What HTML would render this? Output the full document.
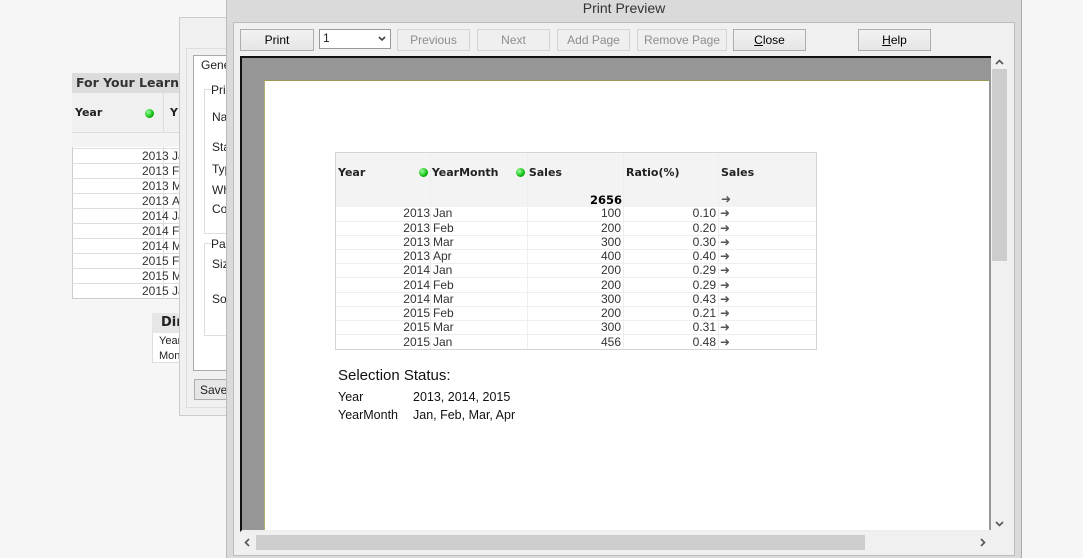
<!DOCTYPE html>
<html><head><style>
*{margin:0;padding:0;box-sizing:border-box}
body{width:1083px;height:558px;background:#f6f6f6;position:relative;overflow:hidden;font-family:"Liberation Sans",sans-serif;font-size:11px;color:#222}
.a{position:absolute}
.btn{position:absolute;top:29px;height:22px;border:1px solid #adadad;background:linear-gradient(#f2f2f2,#e6e6e6);text-align:center;line-height:20px;font-size:12px;color:#000}
.dis{border-color:#d4d4d4;background:#efefef;color:#8d8d8d}
.dot{display:inline-block;width:9px;height:9px;border-radius:50%;background:radial-gradient(circle at 35% 35%,#9f9,#1b1 60%,#070);vertical-align:-1px}
.t td{height:14.2px;padding:0 2px;border-bottom:1px solid #eee;font-size:12px;color:#333;white-space:nowrap;line-height:13px}
.arr{font-size:12px;color:#555;font-weight:bold;font-family:"DejaVu Sans",sans-serif}
.b{font-family:"DejaVu Sans",sans-serif;font-weight:bold;font-size:11px}
.lr div{height:15px;border-top:1px solid #ddd;padding-left:70px;line-height:14px}
</style></head><body>
<div class="a" style="left:72px;top:73px;width:110px;height:226px;background:#fff;border:1px solid #ccc"></div>
<div class="a b" style="left:72px;top:73px;width:110px;height:20px;background:#dcdcdc;font-size:12.5px;color:#333;padding:2px 4px;white-space:nowrap;overflow:hidden">For Your Learning</div>
<div class="a" style="left:72px;top:93px;width:110px;height:40px;background:#f0f0f0;border-bottom:1px solid #ddd"></div>
<div class="a b" style="left:75px;top:106px">Year</div>
<div class="a" style="left:145px;top:108px"><span class="dot"></span></div>
<div class="a" style="left:163px;top:93px;width:1px;height:206px;background:#ddd"></div>
<div class="a b" style="left:170px;top:106px">Y</div>
<div class="a" style="left:72px;top:133px;width:110px;height:14px;background:#f3f3f3"></div>
<div class="a lr" style="left:72px;top:148px;width:107px;font-size:12px;color:#333">
<div>2013&nbsp;Ja</div><div>2013&nbsp;Fe</div><div>2013&nbsp;M</div><div>2013&nbsp;Ap</div><div>2014&nbsp;Ja</div><div>2014&nbsp;Fe</div><div>2014&nbsp;M</div><div>2015&nbsp;Fe</div><div>2015&nbsp;M</div><div>2015&nbsp;Ja</div></div>
<div class="a" style="left:152px;top:313px;width:30px;height:50px;background:#fff;border:1px solid #ddd"></div>
<div class="a b" style="left:152px;top:313px;width:30px;height:20px;background:#e6e6e6;font-size:13px;padding:2px 9px">Dir</div>
<div class="a" style="left:159px;top:334px;font-size:11px;line-height:15px">Year<br>Mon</div>
<div class="a" style="left:179px;top:17px;width:60px;height:399px;background:#f0f0f0;border:1px solid #ccc"></div>
<div class="a" style="left:186px;top:48px;width:50px;height:360px;border:1px solid #ddd"></div>
<div class="a" style="left:193px;top:55px;width:45px;height:316px;background:#fff;border:1px solid #aaa"></div>
<div class="a" style="left:201px;top:58px;font-size:12px">Gene</div>
<div class="a" style="left:204px;top:89px;width:30px;height:145px;border:1px solid #ddd"></div>
<div class="a" style="left:204px;top:243px;width:30px;height:93px;border:1px solid #ddd"></div>
<div class="a" style="left:211px;top:84px;font-size:12px;line-height:1;background:#fff">Pri</div>
<div class="a" style="left:212px;top:110px;font-size:12px">Na</div>
<div class="a" style="left:212px;top:140px;font-size:12px">Sta</div>
<div class="a" style="left:212px;top:162px;font-size:12px">Typ</div>
<div class="a" style="left:212px;top:183px;font-size:12px">Wh</div>
<div class="a" style="left:212px;top:202px;font-size:12px">Co</div>
<div class="a" style="left:211px;top:237px;font-size:12px;background:#fff">Pap</div>
<div class="a" style="left:212px;top:257px;font-size:12px">Siz</div>
<div class="a" style="left:212px;top:292px;font-size:12px">Sou</div>
<div class="a" style="left:194px;top:379px;width:40px;height:21px;border:1px solid #adadad;background:#e6e6e6;padding:3px 5px;font-size:12px">Save</div>
<div class="a" style="left:226px;top:0;width:796px;height:558px;background:#dadada;border-left:1px solid #bbb;border-right:1px solid #aaa"></div>
<div class="a" style="left:226px;top:0;width:796px;height:20px;text-align:center;font-size:14px;line-height:17px;color:#333">Print Preview</div>
<div class="a" style="left:233px;top:22px;width:782px;height:534px;background:#f0f0f0;border:1px solid #bdbdbd"></div>
<div class="btn" style="left:240px;width:74px">Print</div>
<div class="a" style="left:319px;top:29px;width:72px;height:20px;border:1px solid #999;background:#fff;padding:1px 3px;font-size:12px">1<svg style="position:absolute;right:4px;top:6px" width="8" height="6"><path d="M1 1L4 4L7 1" stroke="#444" stroke-width="1.6" fill="none"/></svg></div>
<div class="btn dis" style="left:397px;width:73px">Previous</div>
<div class="btn dis" style="left:477px;width:73px">Next</div>
<div class="btn dis" style="left:557px;width:73px">Add Page</div>
<div class="btn dis" style="left:637px;width:90px">Remove Page</div>
<div class="btn" style="left:733px;width:73px"><u>C</u>lose</div>
<div class="btn" style="left:858px;width:73px"><u>H</u>elp</div>
<div class="a" style="left:240px;top:56px;width:751px;height:476px;background:#969696;border-top:2px solid #111;border-left:2px solid #111;border-bottom:2px solid #eee"></div>
<div class="a" style="left:264px;top:80px;width:725px;height:450px;background:#fff;border-top:1px solid #9a9a50;border-left:1px solid #b0b070"></div>
<div class="a" style="left:991px;top:56px;width:17px;height:476px;background:#f0f0f0"></div>
<div class="a" style="left:992px;top:69px;width:15px;height:192px;background:#cdcdcd"></div>
<svg class="a" style="left:995px;top:59px" width="9" height="6"><path d="M1 5L4.5 1.5L8 5" stroke="#555" stroke-width="1.6" fill="none"/></svg>
<svg class="a" style="left:995px;top:521px" width="9" height="6"><path d="M1 1L4.5 4.5L8 1" stroke="#555" stroke-width="1.6" fill="none"/></svg>
<div class="a" style="left:240px;top:532px;width:751px;height:18px;background:#f0f0f0"></div>
<div class="a" style="left:256px;top:535px;width:609px;height:15px;background:#cdcdcd"></div>
<svg class="a" style="left:244px;top:538px" width="6" height="9"><path d="M5 1L1.5 4.5L5 8" stroke="#555" stroke-width="1.6" fill="none"/></svg>
<svg class="a" style="left:980px;top:538px" width="6" height="9"><path d="M1 1L4.5 4.5L1 8" stroke="#555" stroke-width="1.6" fill="none"/></svg>
<div class="a" style="left:335px;top:152px;width:482px;height:198px;border:1px solid #d4d4d4;background:#fff"></div>
<div class="a" style="left:336px;top:153px;width:480px;height:54px;background:#f3f3f3"></div>
<div class="a" style="left:430px;top:153px;width:1px;height:196px;background:#eee"></div>
<div class="a" style="left:527px;top:153px;width:1px;height:196px;background:#eee"></div>
<div class="a" style="left:623px;top:153px;width:1px;height:196px;background:#eee"></div>
<div class="a" style="left:718px;top:153px;width:1px;height:196px;background:#eee"></div>
<div class="a b" style="left:338px;top:166px">Year</div>
<div class="a b" style="left:419px;top:166px"><span class="dot"></span> YearMonth</div>
<div class="a b" style="left:516px;top:166px"><span class="dot"></span> Sales</div>
<div class="a b" style="left:626px;top:166px">Ratio(%)</div>
<div class="a b" style="left:721px;top:166px">Sales</div>
<div class="a b" style="left:560px;top:193px;width:62px;text-align:right;font-size:11.5px;color:#000">2656</div>
<div class="a" style="left:721px;top:192px"><span class="arr">&#10140;</span></div>
<table class="a t" style="left:336px;top:207px;width:480px;border-collapse:collapse">
<colgroup><col style="width:95px"><col style="width:96px"><col style="width:96px"><col style="width:95px"><col></colgroup>
<tr><td style="text-align:right;padding-right:1px">2013</td><td>Jan</td><td style="text-align:right">100</td><td style="text-align:right">0.10</td><td><span class="arr">&#10140;</span></td></tr>
<tr><td style="text-align:right;padding-right:1px">2013</td><td>Feb</td><td style="text-align:right">200</td><td style="text-align:right">0.20</td><td><span class="arr">&#10140;</span></td></tr>
<tr><td style="text-align:right;padding-right:1px">2013</td><td>Mar</td><td style="text-align:right">300</td><td style="text-align:right">0.30</td><td><span class="arr">&#10140;</span></td></tr>
<tr><td style="text-align:right;padding-right:1px">2013</td><td>Apr</td><td style="text-align:right">400</td><td style="text-align:right">0.40</td><td><span class="arr">&#10140;</span></td></tr>
<tr><td style="text-align:right;padding-right:1px">2014</td><td>Jan</td><td style="text-align:right">200</td><td style="text-align:right">0.29</td><td><span class="arr">&#10140;</span></td></tr>
<tr><td style="text-align:right;padding-right:1px">2014</td><td>Feb</td><td style="text-align:right">200</td><td style="text-align:right">0.29</td><td><span class="arr">&#10140;</span></td></tr>
<tr><td style="text-align:right;padding-right:1px">2014</td><td>Mar</td><td style="text-align:right">300</td><td style="text-align:right">0.43</td><td><span class="arr">&#10140;</span></td></tr>
<tr><td style="text-align:right;padding-right:1px">2015</td><td>Feb</td><td style="text-align:right">200</td><td style="text-align:right">0.21</td><td><span class="arr">&#10140;</span></td></tr>
<tr><td style="text-align:right;padding-right:1px">2015</td><td>Mar</td><td style="text-align:right">300</td><td style="text-align:right">0.31</td><td><span class="arr">&#10140;</span></td></tr>
<tr><td style="text-align:right;padding-right:1px;border:0">2015</td><td style="border:0">Jan</td><td style="text-align:right;border:0">456</td><td style="text-align:right;border:0">0.48</td><td style="border:0"><span class="arr">&#10140;</span></td></tr>
</table>
<div class="a" style="left:338px;top:367px;font-size:15px;color:#111">Selection Status:</div>
<div class="a" style="left:338px;top:388px;font-size:12.5px;color:#111;line-height:18px">Year<br>YearMonth</div>
<div class="a" style="left:413px;top:388px;font-size:12.5px;color:#111;line-height:18px">2013, 2014, 2015<br>Jan, Feb, Mar, Apr</div>
</body></html>
